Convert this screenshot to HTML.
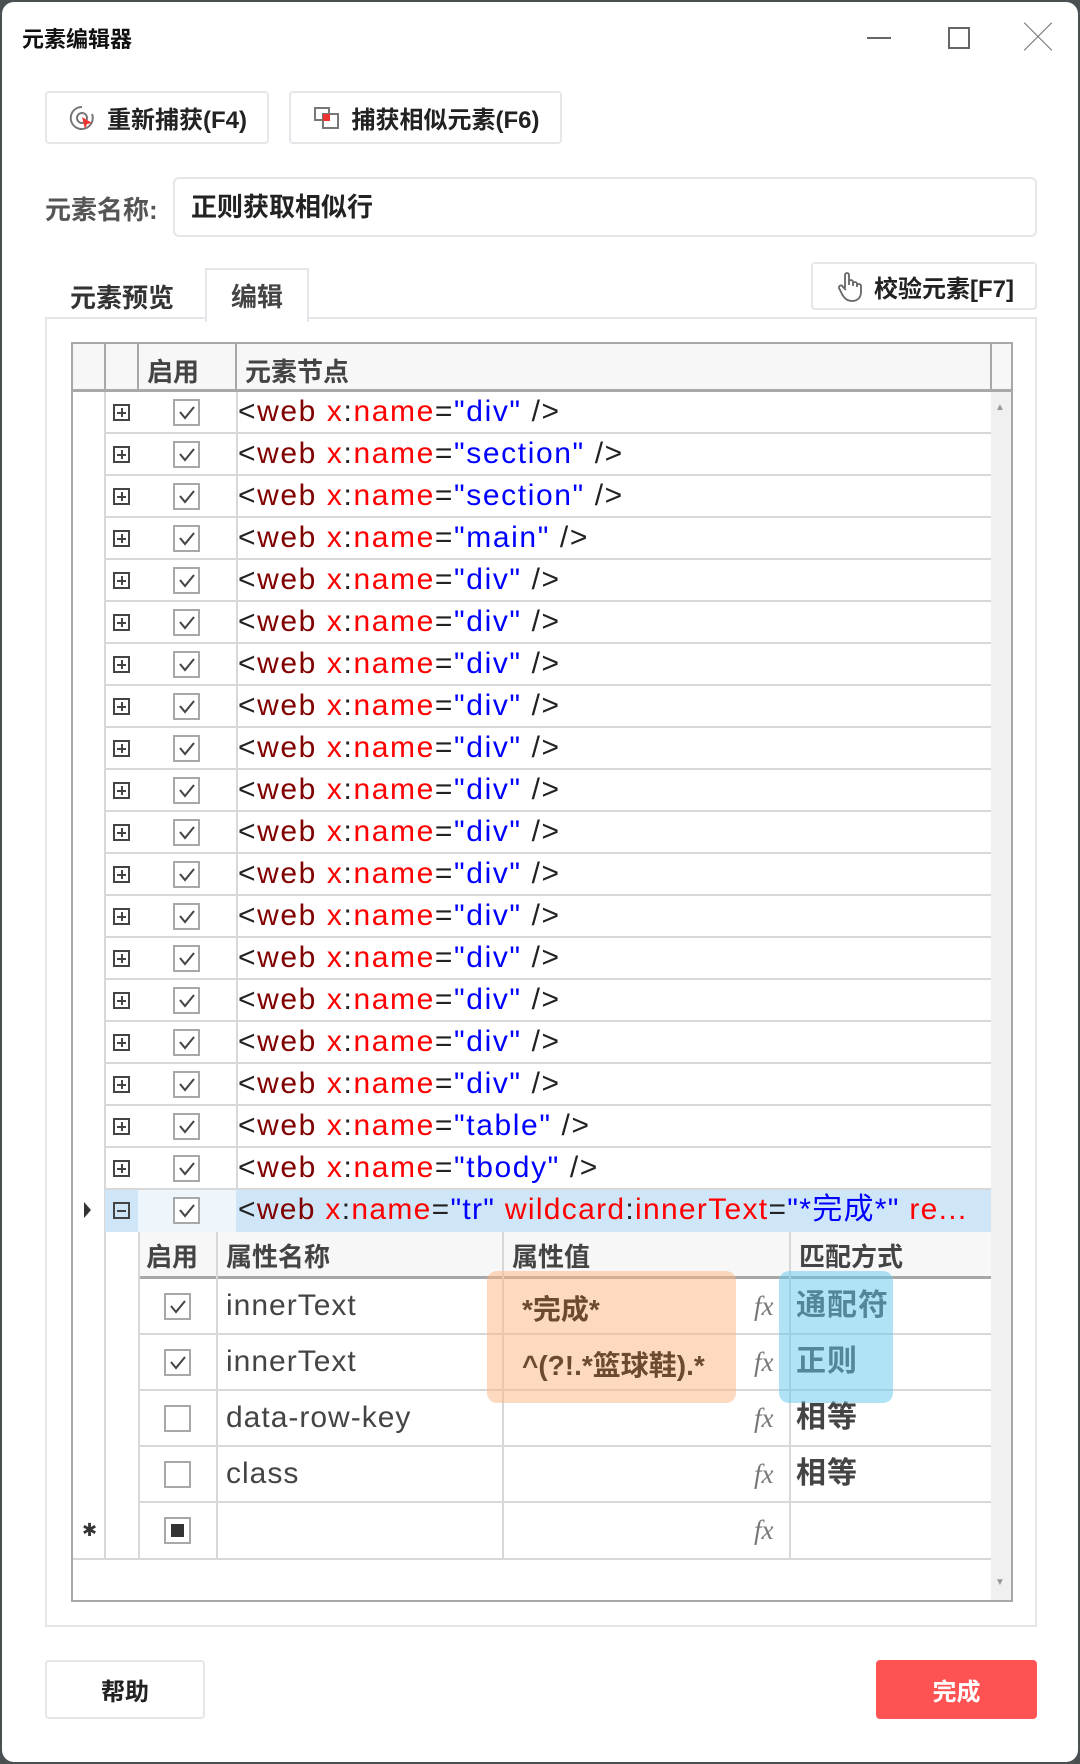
<!DOCTYPE html>
<html><head><meta charset="utf-8"><style>
*{box-sizing:border-box;margin:0;padding:0}
body{width:1080px;height:1764px;background:#4a4f52;font-family:"Liberation Sans","Noto Sans CJK SC",sans-serif;position:relative;overflow:hidden}
.win{position:absolute;left:2px;top:2px;width:1076px;height:1760px;background:#fff;border-radius:12px}
.a{position:absolute}
.btn{position:absolute;border:2px solid #e6e6ea;border-radius:4px;background:#fff;font-size:24px;font-weight:bold;color:#222;display:flex;align-items:center;justify-content:center}
.row{position:absolute;left:103px;width:886px;height:42px;border-bottom:2px solid #d8d8d8}
.exp{position:absolute;left:8px;top:12px;width:17px;height:17px;border:2px solid #444}
.exp:before{content:"";position:absolute;left:2px;top:5.5px;width:9px;height:2px;background:#444}
.exp.p:after{content:"";position:absolute;left:5.5px;top:2px;width:2px;height:9px;background:#444}
.cb{position:absolute;width:27px;height:27px;border:2px solid #a8a8a8;background:#fff}
.cb svg{position:absolute;left:4px;top:5px}
.txt{position:absolute;left:133px;top:0;line-height:40px;font-size:30px;letter-spacing:1.6px;color:#222;white-space:nowrap}
.v{position:absolute;left:131px;top:0;width:2px;height:42px;background:#d8d8d8}
.d{color:#800000}.r{color:#f00}.b{color:#00f}
.sr{position:absolute;left:136px;width:853px;height:56px;border-bottom:2px solid #d8d8d8}
.st{position:absolute;font-size:30px;letter-spacing:1px;color:#444;line-height:54px}
.fx{position:absolute;left:616px;top:0;line-height:54px;font-size:27px;color:#777;font-style:italic;font-family:"Liberation Serif",serif}
</style></head><body><div class="win">
<div class="a" style="left:20px;top:20px;font-size:22px;font-weight:bold;color:#111">元素编辑器</div>
<div class="a" style="left:865px;top:35px;width:24px;height:2px;background:#666"></div>
<div class="a" style="left:946px;top:25px;width:22px;height:22px;border:2px solid #666"></div>
<div class="a" style="left:1022px;top:22px;font-size:28px;color:#777;line-height:28px">╳</div>

<div class="btn" style="left:43px;top:89px;width:224px;height:53px"><svg width="30" height="30" viewBox="0 0 30 30" style="margin-right:10px"><path d="M15 4a11 11 0 1 0 10 7" fill="none" stroke="#777" stroke-width="2"/><circle cx="15" cy="15" r="5" fill="none" stroke="#777" stroke-width="2"/><path d="M15 14l10 6-5 1-2 5z" fill="#e33"/></svg>重新捕获(F4)</div>
<div class="btn" style="left:287px;top:89px;width:273px;height:53px"><svg width="30" height="30" viewBox="0 0 30 30" style="margin-right:10px"><rect x="3" y="5" width="14" height="12" fill="none" stroke="#777" stroke-width="2"/><rect x="11" y="11" width="15" height="14" fill="none" stroke="#777" stroke-width="2"/><rect x="11" y="11" width="7" height="7" fill="#e33"/></svg>捕获相似元素(F6)</div>

<div class="a" style="left:43px;top:188px;font-size:26px;font-weight:bold;color:#555">元素名称:</div>
<div class="a" style="left:171px;top:175px;width:864px;height:60px;border:2px solid #e6e6ea;border-radius:6px;font-size:26px;font-weight:bold;color:#222;padding-left:16px;line-height:56px">正则获取相似行</div>

<div class="a" style="left:68px;top:276px;font-size:26px;font-weight:bold;color:#333">元素预览</div>
<div class="a" style="left:203px;top:266px;width:104px;height:54px;border:2px solid #e6e6ea;border-bottom:none;background:#fff;z-index:2;font-size:26px;font-weight:bold;color:#444;text-align:center;line-height:54px">编辑</div>
<div class="btn" style="left:809px;top:260px;width:226px;height:48px"><svg width="30" height="32" viewBox="0 0 30 32" style="margin-right:10px"><path d="M11 18V5a2 2 0 0 1 4 0v10M15 12a2 2 0 0 1 4 0v4M19 14a2 2 0 0 1 4 0v3M23 16a2 2 0 0 1 4 0v6c0 6-4 9-9 9s-8-3-10-7l-3-6a2 2 0 0 1 4-1l3 3" fill="none" stroke="#666" stroke-width="1.8"/></svg>校验元素[F7]</div>

<div class="a" style="left:43px;top:315px;width:992px;height:1310px;border:2px solid #e6e6ea"></div>

<div class="a" style="left:69px;top:340px;width:942px;height:1260px;border:2px solid #a8a8a8;background:#fff"></div>
<div class="a" style="left:71px;top:342px;width:938px;height:48px;background:#f7f7f7;border-bottom:3px solid #a8a8a8"></div>
<div class="a" style="left:102px;top:342px;width:2px;height:48px;background:#a8a8a8"></div>
<div class="a" style="left:135px;top:342px;width:2px;height:48px;background:#a8a8a8"></div>
<div class="a" style="left:233px;top:342px;width:2px;height:48px;background:#a8a8a8"></div>
<div class="a" style="left:988px;top:342px;width:2px;height:48px;background:#a8a8a8"></div>
<div class="a" style="left:145px;top:350px;font-size:26px;font-weight:bold;color:#444">启用</div>
<div class="a" style="left:243px;top:350px;font-size:26px;font-weight:bold;color:#444">元素节点</div>
<div class="a" style="left:989px;top:390px;width:20px;height:1208px;background:#f0f0f0"></div>
<div class="a" style="left:993px;top:400px;font-size:10px;color:#999">▲</div>
<div class="a" style="left:993px;top:1575px;font-size:10px;color:#999">▼</div>
<div class="a" style="left:102px;top:390px;width:2px;height:1168px;background:#d8d8d8"></div>
<div class="a" style="left:71px;top:1556px;width:918px;height:2px;background:#d8d8d8"></div>

<div id="rows"></div>
<script>
var n=["div","section","section","main"];for(var i=0;i<13;i++)n.push("div");n.push("table","tbody");
var h="";var ck='<svg width="16" height="14" viewBox="0 0 16 14"><path d="M1 6l5 6L15 1" fill="none" stroke="#444" stroke-width="2"/></svg>';
for(var i=0;i<n.length;i++){h+='<div class="row" style="top:'+(390+42*i)+'px"><div class="exp p"></div><div class="cb" style="left:68px;top:7px">'+ck+'</div><div class="v"></div><div class="txt">&lt;<span class="d">web</span> <span class="r">x</span>:<span class="r">name</span>=<span class="b">"'+n[i]+'"</span> /&gt;</div></div>';}
document.getElementById("rows").innerHTML=h;
</script>
<div class="row" style="top:1188px;background:#cfe6f8;border-bottom:none"><div class="a" style="left:0;top:0;width:33px;height:42px;background:#cfe6f8"></div><div class="a" style="left:33px;top:0;width:98px;height:42px;background:#eef6fc"></div><div class="exp"></div><div class="cb" style="left:68px;top:7px"><svg width="16" height="14" viewBox="0 0 16 14"><path d="M1 6l5 6L15 1" fill="none" stroke="#444" stroke-width="2"/></svg></div><div class="txt" style="letter-spacing:1.3px">&lt;<span class="d">web</span> <span class="r">x</span>:<span class="r">name</span>=<span class="b">"tr"</span> <span class="r">wildcard</span>:<span class="r">innerText</span>=<span class="b">"*完成*"</span> <span class="r">re...</span></div></div>
<div class="a" style="left:82px;top:1200px;width:0;height:0;border-left:7px solid #333;border-top:8px solid transparent;border-bottom:8px solid transparent"></div>

<div class="a" style="left:136px;top:1230px;width:853px;height:47px;background:#f7f7f7;border-bottom:3px solid #a8a8a8"></div>
<div class="a" style="left:136px;top:1230px;width:2px;height:328px;background:#d8d8d8"></div>
<div class="a" style="left:214px;top:1230px;width:2px;height:328px;background:#d8d8d8"></div>
<div class="a" style="left:500px;top:1230px;width:2px;height:328px;background:#d8d8d8"></div>
<div class="a" style="left:787px;top:1230px;width:2px;height:328px;background:#d8d8d8"></div>
<div class="a" style="left:144px;top:1235px;font-size:26px;font-weight:bold;color:#444">启用</div>
<div class="a" style="left:224px;top:1235px;font-size:26px;font-weight:bold;color:#444">属性名称</div>
<div class="a" style="left:510px;top:1235px;font-size:26px;font-weight:bold;color:#444">属性值</div>
<div class="a" style="left:797px;top:1235px;font-size:26px;font-weight:bold;color:#444">匹配方式</div>

<div class="sr" style="top:1277px"><div class="cb" style="left:26px;top:14px"><svg width="16" height="14" viewBox="0 0 16 14"><path d="M1 6l5 6L15 1" fill="none" stroke="#444" stroke-width="2"/></svg></div><div class="st" style="left:88px">innerText</div><div class="fx">fx</div><div class="st" style="left:658px;font-weight:bold">通配符</div></div>
<div class="sr" style="top:1333px"><div class="cb" style="left:26px;top:14px"><svg width="16" height="14" viewBox="0 0 16 14"><path d="M1 6l5 6L15 1" fill="none" stroke="#444" stroke-width="2"/></svg></div><div class="st" style="left:88px">innerText</div><div class="fx">fx</div><div class="st" style="left:658px;font-weight:bold">正则</div></div>
<div class="sr" style="top:1389px"><div class="cb" style="left:26px;top:14px"></div><div class="st" style="left:88px">data-row-key</div><div class="fx">fx</div><div class="st" style="left:658px;font-weight:bold">相等</div></div>
<div class="sr" style="top:1445px"><div class="cb" style="left:26px;top:14px"></div><div class="st" style="left:88px">class</div><div class="fx">fx</div><div class="st" style="left:658px;font-weight:bold">相等</div></div>
<div class="sr" style="top:1501px;border-bottom:none"><div class="cb" style="left:26px;top:14px"><div class="a" style="left:5px;top:5px;width:13px;height:13px;background:#333"></div></div><div class="fx">fx</div></div>
<div class="a" style="left:80px;top:1518px;font-size:18px;color:#333">✱</div>

<div class="a" style="left:485px;top:1269px;width:249px;height:132px;background:rgba(252,180,130,.5);border-radius:10px"></div>
<div class="a" style="left:520px;top:1286px;font-size:28px;font-weight:bold;color:#6b4a30">*完成*</div>
<div class="a" style="left:520px;top:1342px;font-size:28px;color:#6b4a30;font-weight:bold">^(?!.*篮球鞋).*</div>
<div class="a" style="left:777px;top:1269px;width:114px;height:132px;background:rgba(100,200,240,.5);border-radius:10px"></div>

<div class="btn" style="left:43px;top:1658px;width:160px;height:59px">帮助</div>
<div class="btn" style="left:874px;top:1658px;width:161px;height:59px;background:#ff5252;border-color:#ff5252;color:#fff">完成</div>
</div></body></html>
